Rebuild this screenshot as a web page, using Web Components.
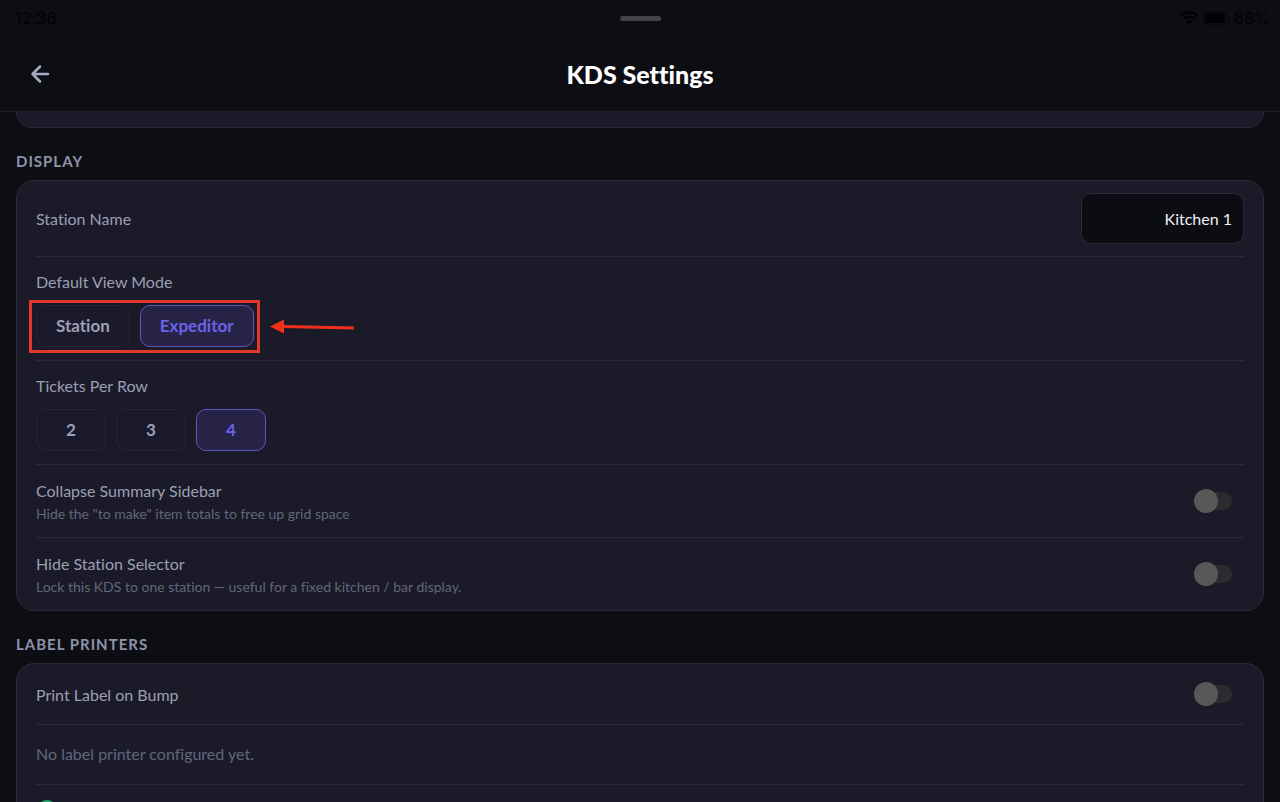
<!DOCTYPE html>
<html lang="en">
<head>
<meta charset="utf-8">
<title>KDS Settings</title>
<style>
    :root {
        --bg: #0d0e14;
        --card: #1b1a29;
        --line: #2a2937;
        --text: #9c9fb3;
        --muted: #62667b;
        --accent: #6a62ea;
    }

    body {
        margin: 0;
        background: var(--bg);
        color: var(--text);
        font-family: Lato, "Liberation Sans", sans-serif;
        font-size: 16px;
        font-variant-ligatures: none;
        line-height: 22px;
    }
</style>
</head>
<body>
<kds-screen>
    <kds-status slot="status" time="12:36" battery="88%"></kds-status>
    <kds-header slot="header">KDS Settings</kds-header>

    <kds-card class="tail"></kds-card>

    <kds-section heading="Display">
        <kds-row>
            <kds-field label="Station Name" value="Kitchen 1"></kds-field>
        </kds-row>
        <kds-row>
            <kds-choice label="Default View Mode" options="Station,Expeditor" selected="Expeditor" marked></kds-choice>
        </kds-row>
        <kds-row>
            <kds-choice label="Tickets Per Row" options="2,3,4" selected="4"></kds-choice>
        </kds-row>
        <kds-row>
            <kds-toggle label="Collapse Summary Sidebar" hint='Hide the "to make" item totals to free up grid space'></kds-toggle>
        </kds-row>
        <kds-row>
            <kds-toggle label="Hide Station Selector" hint="Lock this KDS to one station — useful for a fixed kitchen / bar display."></kds-toggle>
        </kds-row>
    </kds-section>

    <kds-section heading="Label Printers">
        <kds-row>
            <kds-toggle label="Print Label on Bump"></kds-toggle>
        </kds-row>
        <kds-row>
            <kds-note>No label printer configured yet.</kds-note>
        </kds-row>
        <kds-row>
            <kds-add></kds-add>
        </kds-row>
    </kds-section>
</kds-screen>

<script>
/**
 * Base class, renders the template of the component in an open shadow root
 */
class KdsElement extends HTMLElement {
    constructor() {
        super();

        const template = document.createElement('template');
        template.innerHTML = this.render();
        this.attachShadow({mode: 'open'}).appendChild(template.content);
    }

    attr(name) {
        return (this.getAttribute(name) || '').replace(/&/g, '&amp;').replace(/"/g, '&quot;');
    }
}

// Full window layout, the content below the header is cut off at the window edge
class KdsScreen extends KdsElement {
    render() {
        return `
            <style>
                :host {
                    display: flex;
                    flex-direction: column;
                    height: 100vh;
                    overflow: hidden;
                }

                main {
                    flex: 1;
                    min-height: 0;
                    overflow: hidden;
                    padding: 0 16px;
                }
            </style>
            <slot name="status"></slot>
            <slot name="header"></slot>
            <main><slot></slot></main>
        `;
    }
}

// Tablet status bar
class KdsStatus extends KdsElement {
    render() {
        return `
            <style>
                :host {
                    display: grid;
                    grid-template-columns: 1fr auto 1fr;
                    align-items: center;
                    height: 36px;
                    padding: 0 10px;
                    color: #020204;
                    font-family: Inter, sans-serif;
                    font-weight: 500;
                }

                .time {
                    padding-left: 5px;
                }

                .grabber {
                    width: 41px;
                    height: 5px;
                    border-radius: 3px;
                    background: #424347;
                }

                .right {
                    display: flex;
                    align-items: center;
                    justify-content: flex-end;
                    gap: 4px;
                }
            </style>
            <span class="time">${this.attr('time')}</span>
            <span class="grabber"></span>
            <span class="right">
                <svg width="20" height="14" viewBox="0 0 20 14" fill="none" stroke="currentColor" stroke-width="2.4">
                    <path d="M1 5a13 13 0 0 1 18 0M4.200 8.200a8.500 8.500 0 0 1 11.600 0"/>
                    <path d="M10 13.500 7 10.500a4.500 4.500 0 0 1 6 0z" fill="currentColor" stroke="none"/>
                </svg>
                <svg width="27" height="14" viewBox="0 0 27 14" fill="currentColor">
                    <rect x=".5" y=".5" width="23" height="13" rx="4" fill="none" stroke="currentColor" opacity=".5"/>
                    <rect x="2" y="2" width="20" height="10" rx="2.500"/>
                    <path d="M25 4.500c2 .8 2 4.200 0 5z" opacity=".6"/>
                </svg>
                <span>${this.attr('battery')}</span>
            </span>
        `;
    }
}

// Title bar with the back button
class KdsHeader extends KdsElement {
    render() {
        return `
            <style>
                :host {
                    display: grid;
                    grid-template-columns: 1fr auto 1fr;
                    align-items: center;
                    height: 75px;
                    padding: 0 24px;
                    border-bottom: 1px solid #1e1d29;
                }

                button {
                    display: flex;
                    width: 32px;
                    padding: 4px;
                    border: 0;
                    background: none;
                    color: #a3adc2;
                }

                h1 {
                    margin: 0;
                    color: #fff;
                    font-size: 25px;
                    font-weight: 900;
                    line-height: 28px;
                }
            </style>
            <button type="button" aria-label="Back">
                <svg width="24" height="24" viewBox="0 0 24 24" fill="none" stroke="currentColor" stroke-width="2.500" stroke-linecap="round" stroke-linejoin="round">
                    <path d="M20 12H4.500M12 4.500 4.500 12l7.500 7.500"/>
                </svg>
            </button>
            <h1><slot></slot></h1>
        `;
    }
}

// Rounded panel
class KdsCard extends KdsElement {
    render() {
        return `
            <style>
                :host {
                    display: block;
                    padding: 0 19px;
                    border: 1px solid var(--line);
                    border-radius: 18px;
                    background: var(--card);
                }

                /* Lower end of a panel that is scrolled under the header */
                :host(.tail) {
                    height: 15px;
                    border-top: 0;
                    border-radius: 0 0 18px 18px;
                }
            </style>
            <slot></slot>
        `;
    }
}

// Heading and a panel with rows
class KdsSection extends KdsElement {
    render() {
        return `
            <style>
                :host {
                    display: block;
                }

                h2 {
                    margin: 0;
                    padding: 23px 0 9px;
                    color: #9093a8;
                    font-size: 15px;
                    font-weight: 700;
                    line-height: 20px;
                    letter-spacing: 1px;
                    text-transform: uppercase;
                }
            </style>
            <h2>${this.attr('heading')}</h2>
            <kds-card><slot></slot></kds-card>
        `;
    }
}

// Row with a divider below it, except for the last one
class KdsRow extends KdsElement {
    render() {
        return `
            <style>
                :host {
                    display: block;
                    border-bottom: 1px solid var(--line);
                }

                :host(:last-child) {
                    border-bottom: 0;
                }
            </style>
            <slot></slot>
        `;
    }
}

// Label with a text box
class KdsField extends KdsElement {
    render() {
        return `
            <style>
                :host {
                    display: flex;
                    align-items: center;
                    justify-content: space-between;
                    padding: 12px 0;
                }

                input {
                    box-sizing: border-box;
                    width: 163px;
                    height: 51px;
                    padding: 0 11px;
                    border: 1px solid var(--line);
                    border-radius: 10px;
                    background: #0c0c13;
                    color: #f0f0f5;
                    font: inherit;
                    text-align: right;
                }
            </style>
            <label for="field">${this.attr('label')}</label>
            <input id="field" type="text" value="${this.attr('value')}">
        `;
    }
}

// Label with a group of buttons, one of them is selected
class KdsChoice extends KdsElement {
    render() {
        const selected = this.getAttribute('selected');
        const options = this.getAttribute('options').split(',');

        return `
            <style>
                :host {
                    display: block;
                    padding: 14px 0 13px;
                }

                .options {
                    position: relative;
                    display: flex;
                    gap: 10px;
                    width: fit-content;
                    margin-top: 12px;
                }

                button {
                    box-sizing: border-box;
                    min-width: 70px;
                    height: 42px;
                    padding: 0 19px;
                    border: 1px solid #272638;
                    border-radius: 10px;
                    background: #1a1a2c;
                    color: var(--text);
                    font: inherit;
                    font-size: 17px;
                    font-weight: 700;
                }

                button[aria-pressed=true] {
                    border-color: #6057bd;
                    background: #272347;
                    color: var(--accent);
                }

                /* Red frame and arrow over the buttons */
                .frame {
                    position: absolute;
                    inset: -5px -6px -6px -7px;
                    border: 3px solid #e0382a;
                }

                .arrow {
                    position: absolute;
                    left: 100%;
                    top: 12px;
                    margin-left: 15px;
                }
            </style>
            <div id="label">${this.attr('label')}</div>
            <div class="options" role="group" aria-labelledby="label">
                ${options.map(o => `<button type="button" aria-pressed="${o === selected}">${o}</button>`).join('')}
                ${this.hasAttribute('marked') ? `
                    <span class="frame"></span>
                    <svg class="arrow" width="86" height="20" viewBox="0 0 86 20" fill="#f0301c">
                        <path d="M1 9.500 15 2.500v5.500l70 1.500v3L15 11v5.500z"/>
                    </svg>
                ` : ''}
            </div>
        `;
    }
}

// Label, optional hint and a switch
class KdsToggle extends KdsElement {
    render() {
        const hint = this.attr('hint');

        return `
            <style>
                :host {
                    display: flex;
                    align-items: center;
                    justify-content: space-between;
                    min-height: 60px;
                    padding-right: 12px;
                }

                .text {
                    padding: 15px 0 13px;
                }

                label {
                    display: block;
                }

                p {
                    margin: 2px 0 0;
                    color: var(--muted);
                    font-size: 14px;
                    line-height: 20px;
                }

                input {
                    appearance: none;
                    display: grid;
                    align-items: center;
                    width: 38px;
                    height: 24px;
                    margin: 0;
                }

                /* Track and thumb share one cell */
                input::before,
                input::after {
                    content: '';
                    grid-area: 1 / 1;
                }

                input::before {
                    justify-self: end;
                    width: 35px;
                    height: 18px;
                    border-radius: 9px;
                    background: #2b2b30;
                }

                input::after {
                    width: 24px;
                    height: 24px;
                    border-radius: 50%;
                    background: #595857;
                }
            </style>
            <div class="text">
                <label for="toggle">${this.attr('label')}</label>
                ${hint ? `<p id="hint">${hint}</p>` : ''}
            </div>
            <input id="toggle" type="checkbox" role="switch" ${hint ? 'aria-describedby="hint"' : ''}>
        `;
    }
}

// Muted line of text
class KdsNote extends KdsElement {
    render() {
        return `
            <style>
                :host {
                    display: block;
                    padding: 18px 0 19px;
                    color: var(--muted);
                }
            </style>
            <slot></slot>
        `;
    }
}

// Button row for adding a printer
class KdsAdd extends KdsElement {
    render() {
        return `
            <style>
                :host {
                    display: block;
                    padding: 14px 0;
                }

                button {
                    display: flex;
                    padding: 0;
                    border: 0;
                    background: none;
                    color: #2f9a6c;
                }
            </style>
            <button type="button" aria-label="Add">
                <svg width="22" height="22" viewBox="0 0 22 22" fill="none" stroke="currentColor" stroke-width="2" stroke-linecap="round">
                    <circle cx="11" cy="11" r="9"/>
                    <path d="M11 7v8M7 11h8"/>
                </svg>
            </button>
        `;
    }
}

customElements.define('kds-screen', KdsScreen);
customElements.define('kds-status', KdsStatus);
customElements.define('kds-header', KdsHeader);
customElements.define('kds-card', KdsCard);
customElements.define('kds-section', KdsSection);
customElements.define('kds-row', KdsRow);
customElements.define('kds-field', KdsField);
customElements.define('kds-choice', KdsChoice);
customElements.define('kds-toggle', KdsToggle);
customElements.define('kds-note', KdsNote);
customElements.define('kds-add', KdsAdd);
</script>
</body>
</html>
